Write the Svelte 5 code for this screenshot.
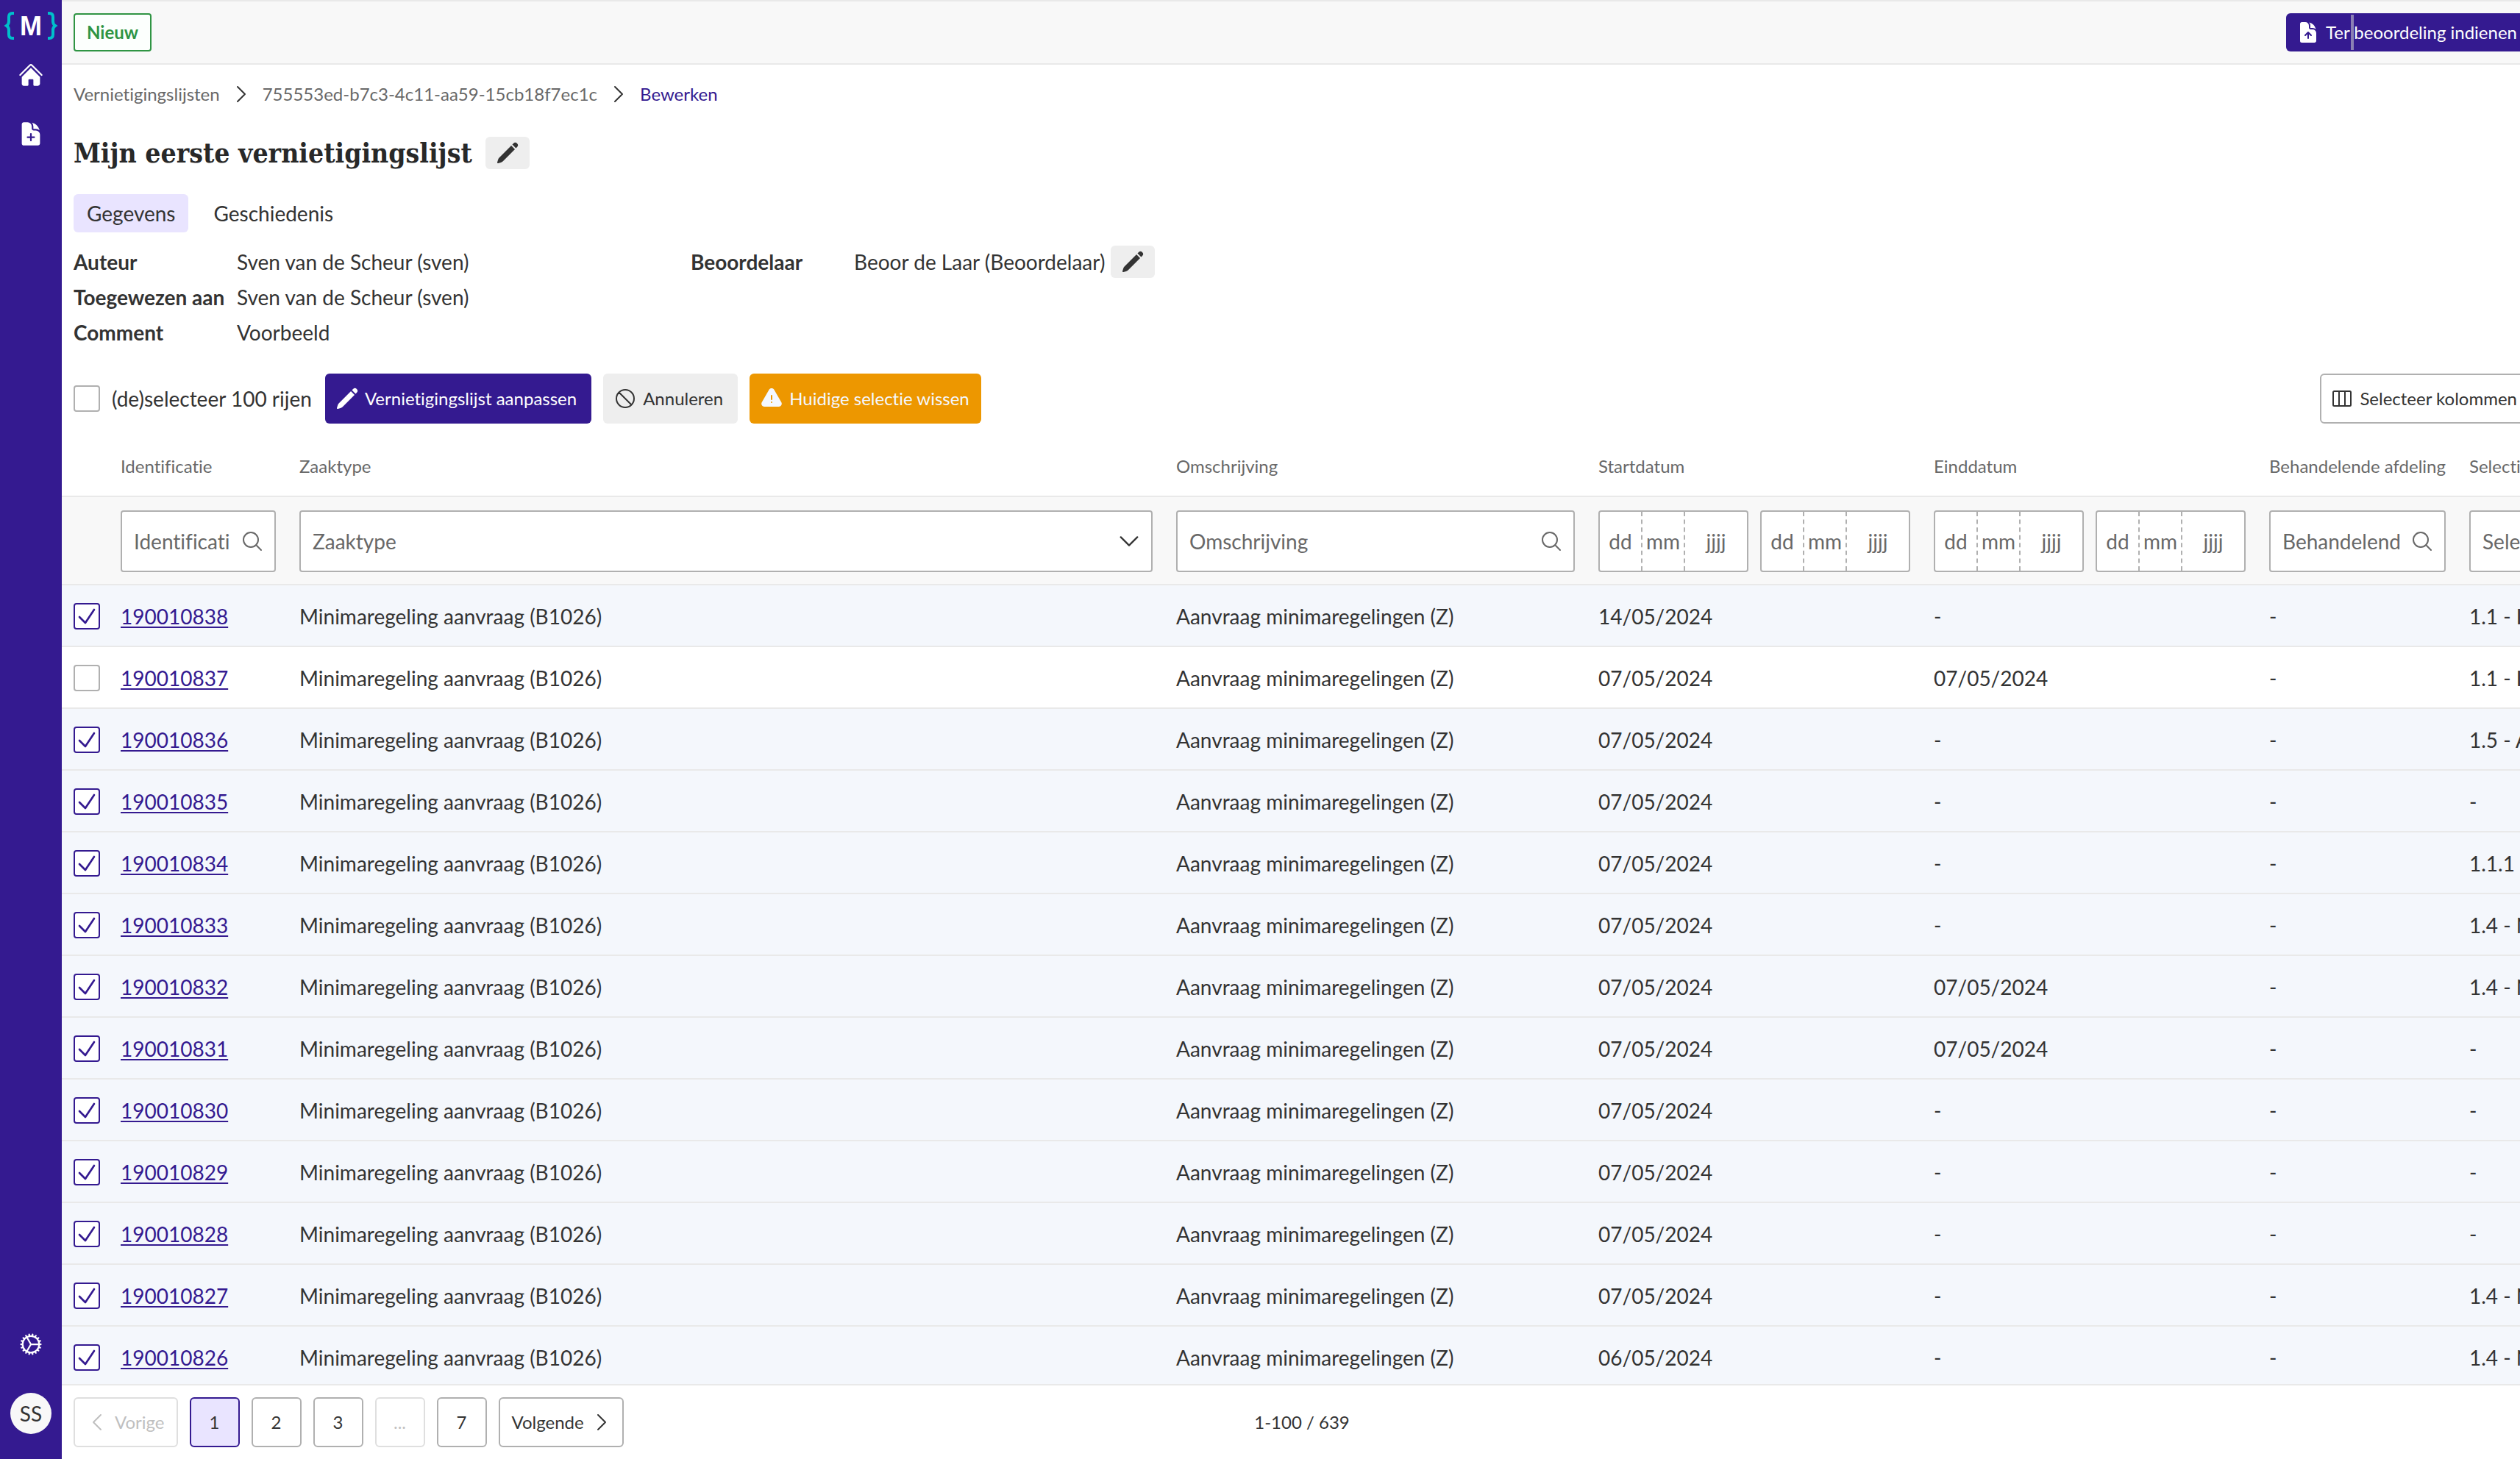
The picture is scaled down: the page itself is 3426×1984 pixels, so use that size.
<script>
  const icons = {
    home: [
      'M11.47 3.841a.75.75 0 0 1 1.06 0l8.69 8.69a.75.75 0 1 0 1.06-1.061l-8.689-8.69a2.25 2.25 0 0 0-3.182 0l-8.69 8.69a.75.75 0 1 0 1.061 1.06l8.69-8.689Z',
      'm12 5.432 8.159 8.159c.03.03.06.058.091.086v6.198c0 1.035-.84 1.875-1.875 1.875H15a.75.75 0 0 1-.75-.75v-4.5a.75.75 0 0 0-.75-.75h-3a.75.75 0 0 0-.75.75V21a.75.75 0 0 1-.75.75H5.625a1.875 1.875 0 0 1-1.875-1.875v-6.198a2.29 2.29 0 0 0 .091-.086L12 5.432Z',
    ],
    docPlus: [
      'M5.625 1.5H9a3.75 3.75 0 0 1 3.75 3.75v1.875c0 1.036.84 1.875 1.875 1.875H16.5a3.75 3.75 0 0 1 3.75 3.75v7.875c0 1.035-.84 1.875-1.875 1.875H5.625a1.875 1.875 0 0 1-1.875-1.875V3.375c0-1.036.84-1.875 1.875-1.875ZM12.75 12a.75.75 0 0 0-1.5 0v2.25H9a.75.75 0 0 0 0 1.5h2.25V18a.75.75 0 0 0 1.5 0v-2.25H15a.75.75 0 0 0 0-1.5h-2.25V12Z',
      'M14.25 5.25a5.23 5.23 0 0 0-1.279-3.434 9.768 9.768 0 0 1 6.963 6.963A5.23 5.23 0 0 0 16.5 7.5h-1.875a.375.375 0 0 1-.375-.375V5.25Z',
    ],
    docUp: [
      'M5.625 1.5H9a3.75 3.75 0 0 1 3.75 3.75v1.875c0 1.036.84 1.875 1.875 1.875H16.5a3.75 3.75 0 0 1 3.75 3.75v7.875c0 1.035-.84 1.875-1.875 1.875H5.625a1.875 1.875 0 0 1-1.875-1.875V3.375c0-1.036.84-1.875 1.875-1.875Zm6.905 9.97a.75.75 0 0 0-1.06 0l-3 3a.75.75 0 1 0 1.06 1.06l1.72-1.72V18a.75.75 0 0 0 1.5 0v-4.19l1.72 1.72a.75.75 0 1 0 1.06-1.06l-3-3Z',
      'M14.25 5.25a5.23 5.23 0 0 0-1.279-3.434 9.768 9.768 0 0 1 6.963 6.963A5.23 5.23 0 0 0 16.5 7.5h-1.875a.375.375 0 0 1-.375-.375V5.25Z',
    ],
    pencil: [
      'M21.731 2.269a2.625 2.625 0 0 0-3.712 0l-1.157 1.157 3.712 3.712 1.157-1.157a2.625 2.625 0 0 0 0-3.712ZM19.513 8.199l-3.712-3.712-12.15 12.15a5.25 5.25 0 0 0-1.32 2.214l-.8 2.685a.75.75 0 0 0 .933.933l2.685-.8a5.25 5.25 0 0 0 2.214-1.32L19.513 8.2Z',
    ],
    warning: [
      'M9.401 3.003c1.155-2 4.043-2 5.197 0l7.355 12.748c1.154 2-.29 4.5-2.599 4.5H4.645c-2.309 0-3.752-2.5-2.598-4.5L9.4 3.003ZM12 8.25a.75.75 0 0 1 .75.75v3.75a.75.75 0 0 1-1.5 0V9a.75.75 0 0 1 .75-.75Zm0 8.25a.75.75 0 1 0 0-1.5.75.75 0 0 0 0 1.5Z',
    ],
    forbid: ['M18.364 18.364A9 9 0 0 0 5.636 5.636m12.728 12.728A9 9 0 0 1 5.636 5.636m12.728 12.728L5.636 5.636'],
    columns: ['M9 4.5v15m6-15v15m-10.875 0h15.75c.621 0 1.125-.504 1.125-1.125V5.625c0-.621-.504-1.125-1.125-1.125H4.125C3.504 4.5 3 5.004 3 5.625v12.75c0 .621.504 1.125 1.125 1.125Z'],
    search: ['m21 21-5.197-5.197m0 0A7.5 7.5 0 1 0 5.196 5.196a7.5 7.5 0 0 0 10.607 10.607Z'],
    right: ['m8.25 4.5 7.5 7.5-7.5 7.5'],
    left: ['M15.75 19.5 8.25 12l7.5-7.5'],
    down: ['m19.5 8.25-7.5 7.5-7.5-7.5'],
    tick: ['m4.5 12.75 6 6 9-13.5'],
    cog: ['M4.5 12a7.5 7.5 0 0 0 15 0m-15 0a7.5 7.5 0 1 1 15 0m-15 0H3m16.5 0H21m-1.5 0H12m-8.457 3.077 1.41-.513m14.095-5.13 1.41-.513M5.106 17.785l1.15-.964m11.49-9.642 1.149-.964M7.501 19.795l.75-1.3m7.5-12.99.75-1.3m-6.063 16.658.26-1.477m2.605-14.772.26-1.477m0 17.726-.26-1.477M10.698 4.614l-.26-1.477M16.5 19.794l-.75-1.299M7.5 4.205 12 12m6.894 5.785-1.149-.964M6.256 7.178l-1.15-.964m15.352 8.864-1.41-.513M4.954 9.435l-1.41-.514M12.002 12l-3.75 6.495'],
  };

  const solid = ['home', 'docPlus', 'docUp', 'pencil', 'warning'];

  const rows = $state([
    { id: '190010838', start: '14/05/2024', end: '-', sel: '1.1 - Ingericht', checked: true },
    { id: '190010837', start: '07/05/2024', end: '07/05/2024', sel: '1.1 - Ingericht', checked: false },
    { id: '190010836', start: '07/05/2024', end: '-', sel: '1.5 - Afgebroken', checked: true },
    { id: '190010835', start: '07/05/2024', end: '-', sel: '-', checked: true },
    { id: '190010834', start: '07/05/2024', end: '-', sel: '1.1.1 - Ingericht', checked: true },
    { id: '190010833', start: '07/05/2024', end: '-', sel: '1.4 - Niet vastgesteld', checked: true },
    { id: '190010832', start: '07/05/2024', end: '07/05/2024', sel: '1.4 - Niet vastgesteld', checked: true },
    { id: '190010831', start: '07/05/2024', end: '07/05/2024', sel: '-', checked: true },
    { id: '190010830', start: '07/05/2024', end: '-', sel: '-', checked: true },
    { id: '190010829', start: '07/05/2024', end: '-', sel: '-', checked: true },
    { id: '190010828', start: '07/05/2024', end: '-', sel: '-', checked: true },
    { id: '190010827', start: '07/05/2024', end: '-', sel: '1.4 - Niet vastgesteld', checked: true },
    { id: '190010826', start: '06/05/2024', end: '-', sel: '1.4 - Niet vastgesteld', checked: true },
  ]);

  const pages = ['1', '2', '3', '...', '7'];
</script>

{#snippet icon(name, cls = '')}
  <svg class="icon {cls}" class:line={!solid.includes(name)} viewBox="0 0 24 24" aria-hidden="true">
    {#each icons[name] as d}<path {d} />{/each}
  </svg>
{/snippet}

{#snippet textFilter(label)}
  <div class="field">
    <input type="text" placeholder={label} aria-label={label} />
    {@render icon('search')}
  </div>
{/snippet}

{#snippet dateField(label)}
  <div class="date" role="group" aria-label={label}>
    <input class="part" type="text" placeholder="dd" aria-label="{label} dag" />
    <input class="part" type="text" placeholder="mm" aria-label="{label} maand" />
    <input class="part year" type="text" placeholder="jjjj" aria-label="{label} jaar" />
  </div>
{/snippet}

<div class="app">
  <nav class="sidebar" aria-label="Hoofdmenu">
    <a class="logo" href="#home" aria-label="Maykin">
      <svg viewBox="0 0 68 38" width="68" height="38">
        <g fill="none" stroke="#00bfcb" stroke-width="4">
          <path d="M11 2H9Q4 2 4 7V13Q4 17 1 19Q4 21 4 25V31Q4 36 9 36H11" />
          <path d="M57 2H59Q64 2 64 7V13Q64 17 67 19Q64 21 64 25V31Q64 36 59 36H57" />
        </g>
        <text x="34" y="32" text-anchor="middle">M</text>
      </svg>
    </a>
    <a class="navlink" href="#home" aria-label="Home">{@render icon('home', 'lg')}</a>
    <a class="navlink" href="#nieuw" aria-label="Vernietigingslijst starten">{@render icon('docPlus', 'lg')}</a>
    <span class="spacer"></span>
    <a class="navlink" href="#instellingen" aria-label="Instellingen">{@render icon('cog', 'lg')}</a>
    <button class="avatar" type="button">SS</button>
  </nav>

  <main>
    <header class="topbar">
      <span class="badge">Nieuw</span>
      <button class="btn primary small" type="button">
        {@render icon('docUp')}Ter beoordeling indienen<span class="caret"></span>
      </button>
    </header>

    <nav class="crumbs" aria-label="Kruimelpad">
      <a href="#lijsten">Vernietigingslijsten</a>
      {@render icon('right')}
      <a href="#lijst">755553ed-b7c3-4c11-aa59-15cb18f7ec1c</a>
      {@render icon('right')}
      <a class="current" href="#bewerken">Bewerken</a>
    </nav>

    <div class="title">
      <h1>Mijn eerste vernietigingslijst</h1>
      <button class="edit" type="button" aria-label="Naam bewerken">{@render icon('pencil')}</button>
    </div>

    <div class="tabs" role="tablist">
      <button class="tab active" type="button" role="tab" aria-selected="true">Gegevens</button>
      <button class="tab" type="button" role="tab" aria-selected="false">Geschiedenis</button>
    </div>

    <div class="details">
      <dl>
        <dt>Auteur</dt>
        <dd>Sven van de Scheur (sven)</dd>
        <dt>Toegewezen aan</dt>
        <dd>Sven van de Scheur (sven)</dd>
        <dt>Comment</dt>
        <dd>Voorbeeld</dd>
      </dl>
      <dl>
        <dt>Beoordelaar</dt>
        <dd>
          Beoor de Laar (Beoordelaar)
          <button class="edit" type="button" aria-label="Beoordelaar bewerken">{@render icon('pencil')}</button>
        </dd>
      </dl>
    </div>

    <div class="toolbar">
      <label class="selectall">
        <span class="check"><input type="checkbox" /></span>
        (de)selecteer 100 rijen
      </label>
      <button class="btn primary" type="button">{@render icon('pencil')}Vernietigingslijst aanpassen</button>
      <button class="btn secondary" type="button">{@render icon('forbid')}Annuleren</button>
      <button class="btn warn" type="button">{@render icon('warning')}Huidige selectie wissen</button>
      <span class="spacer"></span>
      <button class="btn outline" type="button">{@render icon('columns')}Selecteer kolommen</button>
    </div>

    <div class="grid">
      <table>
        <colgroup>
          <col class="c-check" />
          <col class="c-id" />
          <col />
          <col class="c-desc" />
          <col class="c-date" />
          <col class="c-date" />
          <col class="c-dept" />
          <col class="c-sel" />
        </colgroup>
        <thead>
          <tr>
            <th></th>
            <th scope="col">Identificatie</th>
            <th scope="col">Zaaktype</th>
            <th scope="col">Omschrijving</th>
            <th scope="col">Startdatum</th>
            <th scope="col">Einddatum</th>
            <th scope="col">Behandelende afdeling</th>
            <th scope="col">Selectielijstklasse</th>
          </tr>
          <tr class="filters">
            <td></td>
            <td>{@render textFilter('Identificatie')}</td>
            <td>
              <div class="field select">
                <select aria-label="Zaaktype"><option>Zaaktype</option></select>
                {@render icon('down', 'lg')}
              </div>
            </td>
            <td>{@render textFilter('Omschrijving')}</td>
            <td><div class="range">{@render dateField('Startdatum vanaf')}{@render dateField('Startdatum tot')}</div></td>
            <td><div class="range">{@render dateField('Einddatum vanaf')}{@render dateField('Einddatum tot')}</div></td>
            <td>{@render textFilter('Behandelende afdeling')}</td>
            <td>{@render textFilter('Selectielijstklasse')}</td>
          </tr>
        </thead>
        <tbody>
          {#each rows as row (row.id)}
            <tr class:selected={row.checked}>
              <td class="tick">
                <span class="check">
                  <input type="checkbox" bind:checked={row.checked} aria-label="Selecteer {row.id}" />
                  {#if row.checked}{@render icon('tick', 'mark')}{/if}
                </span>
              </td>
              <td><a href="#zaak-{row.id}">{row.id}</a></td>
              <td>Minimaregeling aanvraag (B1026)</td>
              <td>Aanvraag minimaregelingen (Z)</td>
              <td>{row.start}</td>
              <td>{row.end}</td>
              <td>-</td>
              <td>{row.sel}</td>
            </tr>
          {/each}
        </tbody>
      </table>
    </div>

    <footer>
      <nav class="pager" aria-label="Paginering">
        <button class="page prev" type="button" disabled>{@render icon('left')}Vorige</button>
        {#each pages as page}
          <button class="page" class:active={page === '1'} type="button" disabled={page === '...'}>{page}</button>
        {/each}
        <button class="page next" type="button">Volgende{@render icon('right')}</button>
      </nav>
      <span class="count">1-100 / 639</span>
    </footer>
  </main>
</div>

<style>
  :global(body) {
    margin: 0;
    overflow: hidden;
    background: #fff;
  }

  .app {
    --brand: #341a90;
    --tint: #e9e4ff;
    --text: #333;
    --muted: #686868;
    --line: #b0b0b0;
    --rule: #e9e9e9;
    display: flex;
    width: calc(100% + 30px);
    height: 100vh;
    color: var(--text);
    font: 28px/36px Lato, 'Liberation Sans', sans-serif;
    font-variant-ligatures: no-common-ligatures;
  }

  .app :is(button, input, select) {
    box-sizing: border-box;
    margin: 0;
    padding: 0;
    border: 0;
    background: none;
    color: inherit;
    font: inherit;
    font-variant-ligatures: inherit;
  }

  .icon {
    flex: none;
    width: 32px;
    height: 32px;
    fill: currentColor;
    fill-rule: evenodd;
  }

  .icon.lg {
    width: 36px;
    height: 36px;
  }

  .icon.line {
    fill: none;
    stroke: currentColor;
    stroke-width: 1.5;
    stroke-linecap: round;
    stroke-linejoin: round;
  }

  .spacer {
    flex: 1;
  }

  .sidebar {
    box-sizing: border-box;
    display: flex;
    flex: none;
    flex-direction: column;
    align-items: center;
    width: 84px;
    padding: 16px 0 34px;
    background: var(--brand);
    color: #fff;
  }

  .logo {
    display: flex;
    margin-bottom: 8px;
  }

  .logo svg {
    overflow: visible;
  }

  .logo text {
    fill: #fff;
    font: bold 36px 'Liberation Sans', sans-serif;
  }

  .navlink {
    display: flex;
    padding: 22px;
    color: #fff;
  }

  .sidebar .avatar {
    width: 56px;
    height: 56px;
    margin-top: 26px;
    border-radius: 50%;
    background: #f8f8f8;
    color: var(--text);
  }

  main {
    display: flex;
    flex: 1;
    flex-direction: column;
    min-width: 0;
  }

  .topbar {
    display: flex;
    align-items: center;
    justify-content: space-between;
    padding: 16px;
    border-top: 2px solid var(--rule);
    border-bottom: 2px solid var(--rule);
    background: #f8f8f8;
  }

  .badge {
    padding: 8px 16px;
    border: 2px solid #2f9443;
    border-radius: 4px;
    background: #fcfffd;
    color: #2f9443;
    font-weight: bold;
    font-size: 24px;
    line-height: 32px;
  }

  .app .btn {
    display: flex;
    align-items: center;
    gap: 8px;
    height: 68px;
    padding: 0 20px 0 14px;
    border-radius: 6px;
    font-size: 24px;
    white-space: nowrap;
  }

  .app .btn.small {
    position: relative;
    height: 52px;
    padding-right: 18px;
  }

  .app .btn.primary {
    background: var(--brand);
    color: #fff;
  }

  .app .btn.secondary {
    background: #eee;
  }

  .app .btn.warn {
    padding-right: 16px;
    background: #ed9700;
    color: #f4f8ff;
  }

  .app .btn.outline {
    padding: 0 16px 0 12px;
    border: 2px solid var(--line);
  }

  .caret {
    position: absolute;
    top: 2px;
    bottom: 2px;
    left: 88px;
    width: 4px;
    background: #8b80b4;
  }

  .crumbs {
    display: flex;
    align-items: center;
    gap: 13px;
    padding: 24px 16px 42px;
    font-size: 24px;
    line-height: 32px;
  }

  .crumbs a {
    color: var(--muted);
    text-decoration: none;
  }

  .crumbs a.current {
    color: var(--brand);
  }

  .title {
    display: flex;
    align-items: center;
    gap: 18px;
    padding: 0 16px;
  }

  h1 {
    margin: 0;
    color: #282828;
    font: bold 37px/44px 'DejaVu Serif Condensed', 'DejaVu Serif', serif;
  }

  .app .edit {
    display: flex;
    align-items: center;
    justify-content: center;
    width: 60px;
    height: 44px;
    border-radius: 6px;
    background: #eee;
  }

  .tabs {
    display: flex;
    gap: 16px;
    padding: 34px 16px 16px;
  }

  .app .tab {
    height: 52px;
    padding: 0 18px;
    border-radius: 6px;
  }

  .app .tab.active {
    background: var(--tint);
  }

  .details {
    display: grid;
    grid-template-columns: repeat(4, 1fr);
    gap: 16px;
    padding: 0 16px;
  }

  dl {
    display: grid;
    grid-template-columns: 206px 1fr;
    grid-auto-rows: 48px;
    column-gap: 16px;
    align-content: start;
    align-items: center;
    margin: 0;
    white-space: nowrap;
  }

  dt {
    font-weight: bold;
  }

  dd {
    display: flex;
    align-items: center;
    gap: 8px;
    margin: 0;
  }

  .toolbar {
    display: flex;
    align-items: center;
    gap: 16px;
    padding: 32px 16px 16px;
  }

  .selectall {
    display: flex;
    align-items: center;
    gap: 16px;
    padding-right: 2px;
  }

  .check {
    display: inline-grid;
    place-items: center;
  }

  .check > :global(*) {
    grid-area: 1 / 1;
  }

  .app .check input {
    width: 36px;
    height: 36px;
    border: 2px solid var(--line);
    border-radius: 4px;
    background: #fff;
    appearance: none;
  }

  .app .check input:checked {
    border-color: var(--brand);
  }

  .icon.mark {
    color: var(--brand);
    stroke-width: 2;
    pointer-events: none;
  }

  .grid {
    flex: 1;
    min-height: 0;
    overflow: hidden;
  }

  table {
    width: calc(100% + 400px);
    border-spacing: 0;
    table-layout: fixed;
  }

  .c-check {
    width: 64px;
  }

  .c-id {
    width: 243px;
  }

  .c-desc {
    width: 574px;
  }

  .c-date {
    width: 456px;
  }

  .c-dept {
    width: 272px;
  }

  .c-sel {
    width: 515px;
  }

  th,
  td {
    box-sizing: border-box;
    height: 84px;
    padding: 2px 16px 0;
    border-bottom: 2px solid var(--rule);
    text-align: left;
    white-space: nowrap;
  }

  th {
    color: var(--muted);
    font-weight: normal;
    font-size: 24px;
  }

  td.tick {
    padding-right: 0;
    line-height: 0;
  }

  .filters td {
    height: 120px;
    padding: 18px 16px 16px;
    background: #f8f8f8;
  }

  .selected td {
    background: #f4f7fc;
  }

  td a {
    color: var(--brand);
    text-decoration-thickness: 2px;
    text-underline-offset: 3px;
  }

  .field,
  .date {
    box-sizing: border-box;
    display: flex;
    align-items: center;
    height: 84px;
    border: 2px solid var(--line);
    border-radius: 4px;
    background: #fff;
    color: var(--muted);
  }

  .field {
    gap: 14px;
    padding: 0 14px 0 16px;
  }

  .app .field input {
    flex: 1;
    width: 0;
    min-width: 0;
    height: 100%;
  }

  .app ::placeholder {
    color: var(--muted);
    opacity: 1;
  }

  .field.select {
    display: grid;
    align-items: center;
    padding: 0;
  }

  .field.select > :global(*) {
    grid-area: 1 / 1;
  }

  .app .field select {
    width: 100%;
    height: 80px;
    padding: 0 16px;
    appearance: none;
  }

  .field.select :global(.icon) {
    justify-self: end;
    margin-right: 12px;
    color: var(--text);
    pointer-events: none;
  }

  .range {
    display: grid;
    grid-template-columns: 1fr 1fr;
    gap: 16px;
  }

  .app .part {
    width: 56px;
    height: 100%;
    text-align: center;
  }

  .app .part + .part {
    width: 58px;
    border-left: 2px dashed var(--line);
  }

  .app .part.year.year {
    flex: 1;
    width: 0;
    min-width: 0;
  }

  footer {
    display: grid;
    grid-template-columns: 1fr auto 1fr;
    align-items: center;
    padding: 16px;
    border-top: 2px solid var(--rule);
    background: #fff;
    font-size: 24px;
  }

  .pager {
    display: flex;
    gap: 16px;
  }

  .app .page {
    display: flex;
    align-items: center;
    justify-content: center;
    gap: 8px;
    min-width: 68px;
    height: 68px;
    border: 2px solid var(--line);
    border-radius: 6px;
  }

  .app .page.prev {
    padding: 0 16px 0 14px;
  }

  .app .page.next {
    padding: 0 12px 0 16px;
  }

  .app .page.active {
    border-color: var(--brand);
    background: var(--tint);
  }

  .app .page:disabled {
    border-color: #dfdfdf;
    color: #bfbfbf;
  }
</style>
